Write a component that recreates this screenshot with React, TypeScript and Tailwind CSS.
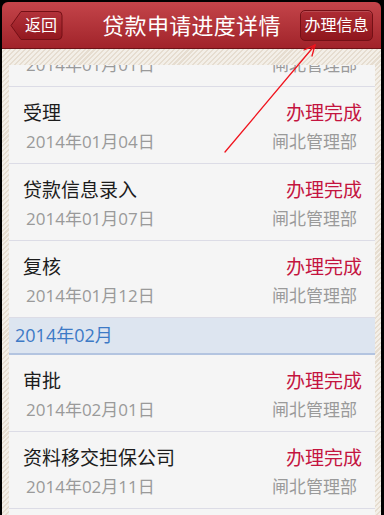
const rowsJan = [
  { title: '受理', date: '2014年01月04日' },
  { title: '贷款信息录入', date: '2014年01月07日' },
  { title: '复核', date: '2014年01月12日' },
];

const rowsFeb = [
  { title: '审批', date: '2014年02月01日' },
  { title: '资料移交担保公司', date: '2014年02月11日' },
  { title: '放款', date: '2014年02月15日' },
];

function Row({ title, date }: { title: string; date: string }) {
  return (
    <div className="h-[77px] border-b border-[#dcdce6] bg-[#f5f5f5] pl-[14px] pr-[13px] pt-[13px]">
      <div className="flex items-center justify-between leading-[26px]">
        <span className="text-[19px] text-[#1c1c1c]">{title}</span>
        <span className="text-[19px] text-[#c4143f]">办理完成</span>
      </div>
      <div className="mt-[4px] flex items-center justify-between pl-[3px] pr-[5px] leading-[24px]">
        <span className="text-[17px] text-[#9a9a9a]">{date}</span>
        <span className="text-[17px] text-[#9a9a9a]">闸北管理部</span>
      </div>
    </div>
  );
}

export default function App() {
  return (
    <div
      className="relative h-[515px] w-[384px] overflow-hidden bg-black pl-[2px] pr-[3px] pt-[2px]"
      style={{ fontFamily: '"Open Sans", "Noto Sans CJK SC", sans-serif' }}
    >
      <div className="flex h-full flex-col overflow-hidden rounded-t-[6px]">
        <header className="grid h-[47px] shrink-0 grid-cols-[1fr_auto_1fr] items-center border-b border-[#6e1217] bg-gradient-to-b from-[#c4444a] to-[#a1232a] px-[8px]">
          <div className="flex">
            <button className="relative flex h-[31px] w-[53px] items-center justify-center pl-[9px] text-[16px] leading-none text-white">
              <svg className="absolute inset-0" width="53" height="31" viewBox="0 0 53 31">
                <defs>
                  <linearGradient id="bk" x1="0" y1="0" x2="0" y2="1">
                    <stop offset="0" stopColor="#b3323a" />
                    <stop offset="1" stopColor="#92181f" />
                  </linearGradient>
                </defs>
                <path
                  d="M1 15.5 L11 1.5 H48 Q52 1.5 52 5.5 V25.5 Q52 29.5 48 29.5 H11 Z"
                  fill="url(#bk)"
                  stroke="#741016"
                  strokeWidth="1"
                />
              </svg>
              <span className="relative">返回</span>
            </button>
          </div>
          <h1 className="text-[22px] leading-none tracking-[0.3px] text-white">贷款申请进度详情</h1>
          <div className="flex justify-end">
            <button className="flex h-[31px] w-[73px] items-center justify-center rounded-[5px] border border-[#741016] bg-gradient-to-b from-[#ae2c34] to-[#8f161d] text-[16px] leading-none text-white shadow-[inset_0_1px_0_rgba(255,255,255,0.15)]">
              办理信息
            </button>
          </div>
        </header>

        <main className="flex-1 bg-[image:repeating-linear-gradient(135deg,#f3efe8_0px,#f3efe8_2px,#e6ddd0_2px,#e6ddd0_3.5px)] pl-[7px] pr-[6px] pt-[16px]">
          <div className="h-full overflow-hidden">
            <div className="-mt-[55px]">
              <Row title="签约" date="2014年01月01日" />
              {rowsJan.map((r) => (
                <Row key={r.date} {...r} />
              ))}
              <div className="flex h-[37px] items-center border-b-2 border-[#b3c4e0] bg-[#dde5f0] pl-[6px] text-[18px] text-[#3d7ac6]">
                2014年02月
              </div>
              {rowsFeb.map((r) => (
                <Row key={r.date} {...r} />
              ))}
            </div>
          </div>
        </main>
      </div>

      <svg className="pointer-events-none absolute left-0 top-0" width="384" height="515" viewBox="0 0 384 515">
        <g stroke="#f0141e" strokeWidth="1.3" fill="none" strokeLinecap="round">
          <path d="M225 152 L315 45" />
          <path d="M315 45 L304 50" />
          <path d="M315 45 L312 56" />
        </g>
      </svg>
    </div>
  );
}
